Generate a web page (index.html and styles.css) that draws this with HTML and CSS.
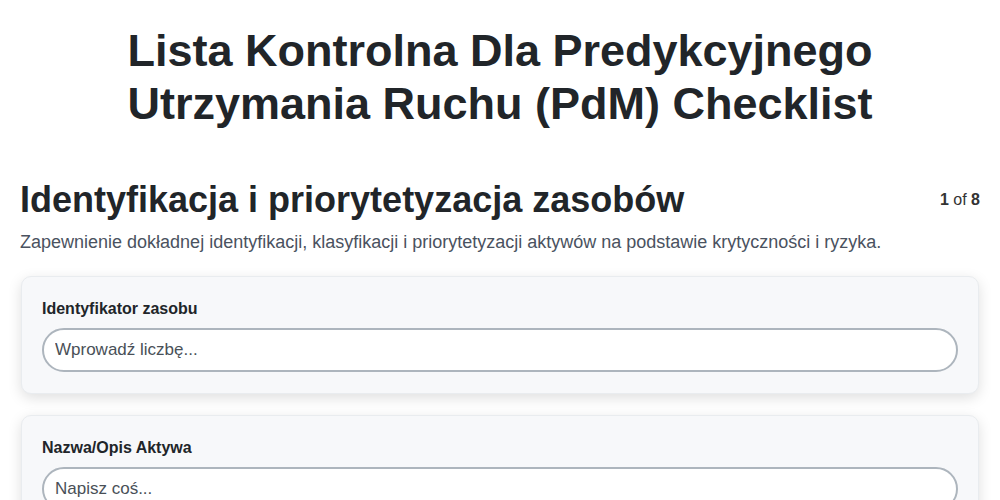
FILE: index.html
```html
<!DOCTYPE html>
<html lang="pl">
<head>
    <meta charset="UTF-8">
    <title>Lista Kontrolna PdM</title>
    <link rel="stylesheet" href="styles.css">
</head>
<body>
    <div class="container">
        <h1 class="page-title">Lista Kontrolna Dla Predykcyjnego Utrzymania Ruchu (PdM) Checklist</h1>
        <div class="section-header">
            <h2 class="section-title">Identyfikacja i priorytetyzacja zasobów</h2>
            <div class="step-count"><b>1</b> of <b>8</b></div>
        </div>
        <p class="section-desc">Zapewnienie dokładnej identyfikacji, klasyfikacji i priorytetyzacji aktywów na podstawie krytyczności i ryzyka.</p>
        <div class="field-card">
            <label class="field-label" for="assetId">Identyfikator zasobu</label>
            <input class="field-input" id="assetId" type="text" placeholder="Wprowadź liczbę...">
        </div>
        <div class="field-card">
            <label class="field-label" for="assetName">Nazwa/Opis Aktywa</label>
            <input class="field-input" id="assetName" type="text" placeholder="Napisz coś...">
        </div>
    </div>
</body>
</html>
```

FILE: styles.css
```css
body {
    font-family: "Liberation Sans", Arial, sans-serif;
    margin: 0;
    background-color: #fff;
    color: #212529;
}
.container {
    padding: 0 20px;
}
.page-title {
    text-align: center;
    font-size: 45px;
    line-height: 53px;
    font-weight: 700;
    margin: 24px 0 48px;
}
.section-header {
    display: flex;
    justify-content: space-between;
    align-items: center;
}
.section-title {
    font-size: 36px;
    font-weight: 700;
    margin: 0;
    line-height: 44px;
}
.step-count {
    font-size: 16px;
    color: #333;
}
.section-desc {
    font-size: 18px;
    color: #4a5260;
    margin: 10px 0 23px;
}
.field-card {
    background: #f7f8fa;
    border: 1px solid #e9ecef;
    border-radius: 10px;
    box-shadow: 0 4px 14px rgba(0,0,0,0.13);
    padding: 23px 20px 21px;
    margin: 0 1px 21px;
}
.field-label {
    display: block;
    font-size: 16px;
    font-weight: 700;
    margin-bottom: 10px;
}
.field-input {
    display: block;
    width: 100%;
    box-sizing: border-box;
    height: 44px;
    padding: 0 11px;
    border: 2px solid #adb5bd;
    border-radius: 22px;
    font-family: "Liberation Sans", Arial, sans-serif;
    font-size: 17px;
    background: #fff;
}
.field-input::placeholder {
    color: #495057;
}
```
